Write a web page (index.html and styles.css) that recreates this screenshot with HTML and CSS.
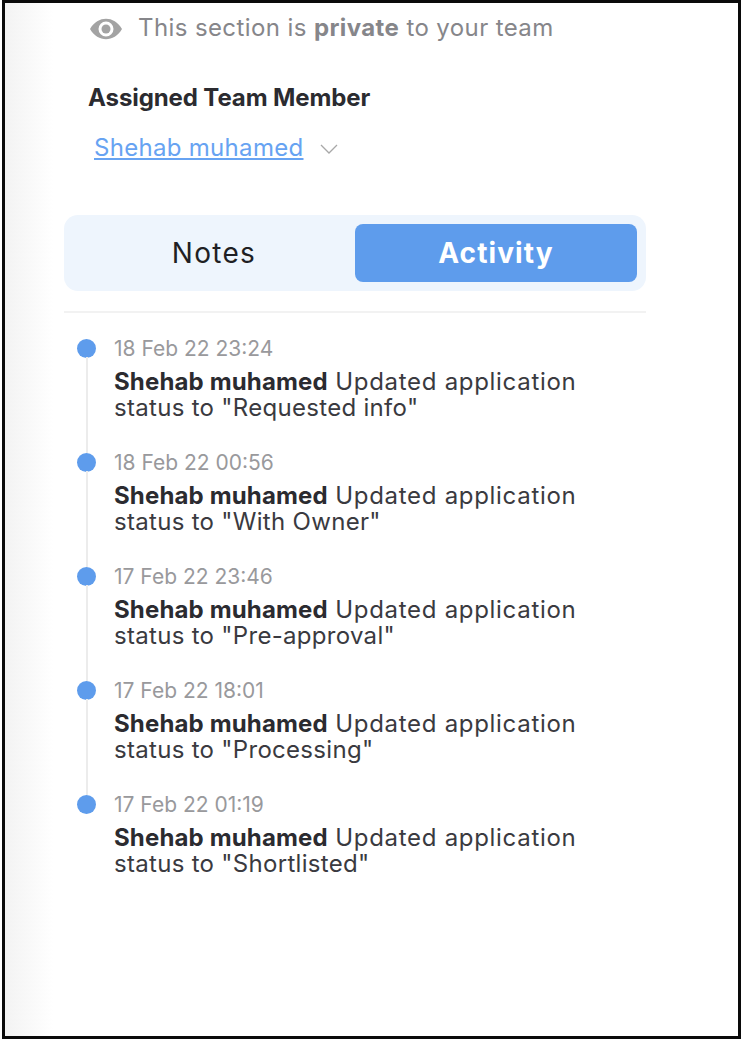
FILE: index.html
```html
<!DOCTYPE html>
<html lang="en">
<head>
<meta charset="utf-8">
<title>Activity</title>
<link rel="stylesheet" href="styles.css">
</head>
<body>
<main class="frame">
  <div class="privacy">
    <svg class="eye" viewBox="0 0 32 22" width="32" height="22" aria-hidden="true">
      <path fill-rule="evenodd" fill="#a3a3a3" d="M0 11C4 4 10 .8 16 .8S28 4 32 11c-4 7-10 10.200-16 10.200S4 18 0 11zm16-7.500a7.500 7.500 0 1 0 0 15 7.500 7.500 0 0 0 0-15z"/>
      <circle cx="16" cy="11" r="4.500" fill="#a3a3a3"/>
    </svg>
    <span>This section is <b>private</b> to your team</span>
  </div>
  <h2 class="assigned-title">Assigned Team Member</h2>
  <div class="assignee">
    <a class="assignee-link" href="#">Shehab muhamed</a>
    <svg class="chevron" viewBox="0 0 18 11" width="18" height="11" aria-hidden="true">
      <path d="M1 1l8 8 8-8" fill="none" stroke="#a8a8a8" stroke-width="1.300"/>
    </svg>
  </div>
  <div class="tabs">
    <div class="tab">Notes</div>
    <div class="tab tab-active">Activity</div>
  </div>
  <ol class="timeline">
    <li class="event"><time class="when">18 Feb 22 23:24</time><p class="what"><b>Shehab muhamed</b> Updated application<br>status to "Requested info"</p></li>
    <li class="event"><time class="when">18 Feb 22 00:56</time><p class="what"><b>Shehab muhamed</b> Updated application<br>status to "With Owner"</p></li>
    <li class="event"><time class="when">17 Feb 22 23:46</time><p class="what"><b>Shehab muhamed</b> Updated application<br>status to "Pre-approval"</p></li>
    <li class="event"><time class="when">17 Feb 22 18:01</time><p class="what"><b>Shehab muhamed</b> Updated application<br>status to "Processing"</p></li>
    <li class="event"><time class="when">17 Feb 22 01:19</time><p class="what"><b>Shehab muhamed</b> Updated application<br>status to "Shortlisted"</p></li>
  </ol>
</main>
</body>
</html>
```
FILE: styles.css
```css
html, body { margin: 0; padding: 0; background: #fff; }
body { font-family: Inter, "Open Sans", sans-serif; color: #2f2f33; height: 1042px; overflow: hidden; }
.frame {
  box-sizing: border-box;
  width: 739px; height: 1039px;
  margin-left: 2px;
  border: 3px solid #0a0a0a;
  background: linear-gradient(90deg, #f3f3f3 0, #fafafa 28px, #fff 48px);
  padding: 8px 0 0 59px;
}
.privacy { display: flex; align-items: center; gap: 16px; margin-left: 26px; height: 32px; font-size: 24px; letter-spacing: .4px; color: #86868a; }
.privacy b { font-weight: 700; }
.eye { flex: none; margin-top: 4px; }
.assigned-title { margin: 39px 0 0 24px; font-size: 24px; line-height: 32px; font-weight: 700; letter-spacing: -.1px; color: #2b2b30; }
.assignee { display: flex; align-items: center; gap: 16px; margin: 17px 0 0 30px; height: 32px; }
.assignee-link { font-size: 24px; letter-spacing: .3px; color: #67a3f2; }
.chevron { margin-top: 4px; }
.tabs { display: flex; box-sizing: border-box; width: 582px; height: 76px; margin-top: 52px; padding: 9px; background: #eef5fd; border-radius: 14px; }
.tab { flex: 1; display: flex; align-items: center; justify-content: center; font-size: 28px; letter-spacing: 1.300px; color: #1f1f24; border-radius: 8px; }
.tab-active { background: #5e9cec; color: #fff; font-weight: 700; letter-spacing: 1.100px; }
.timeline { list-style: none; margin: 20px 0 0; padding: 23px 0 0; width: 582px; border-top: 2px solid #f2f2f2; }
.event { position: relative; padding: 0 0 0 50px; height: 114px; }
.event::before { content: ""; position: absolute; left: 13px; top: 3px; width: 19px; height: 19px; border-radius: 50%; background: #5e9cec; }
.event::after { content: ""; position: absolute; left: 21.500px; top: 21px; width: 2px; height: 96px; background: #ececec; }
.event:last-child::after { display: none; }
.when { display: block; font-size: 21px; line-height: 26px; color: #99999c; }
.what { margin: 7px 0 0; font-size: 24px; line-height: 26px; letter-spacing: .3px; color: #3a3a40; }
.what::first-line { letter-spacing: .7px; }
.what b { letter-spacing: .15px; color: #2b2b30; }
```
